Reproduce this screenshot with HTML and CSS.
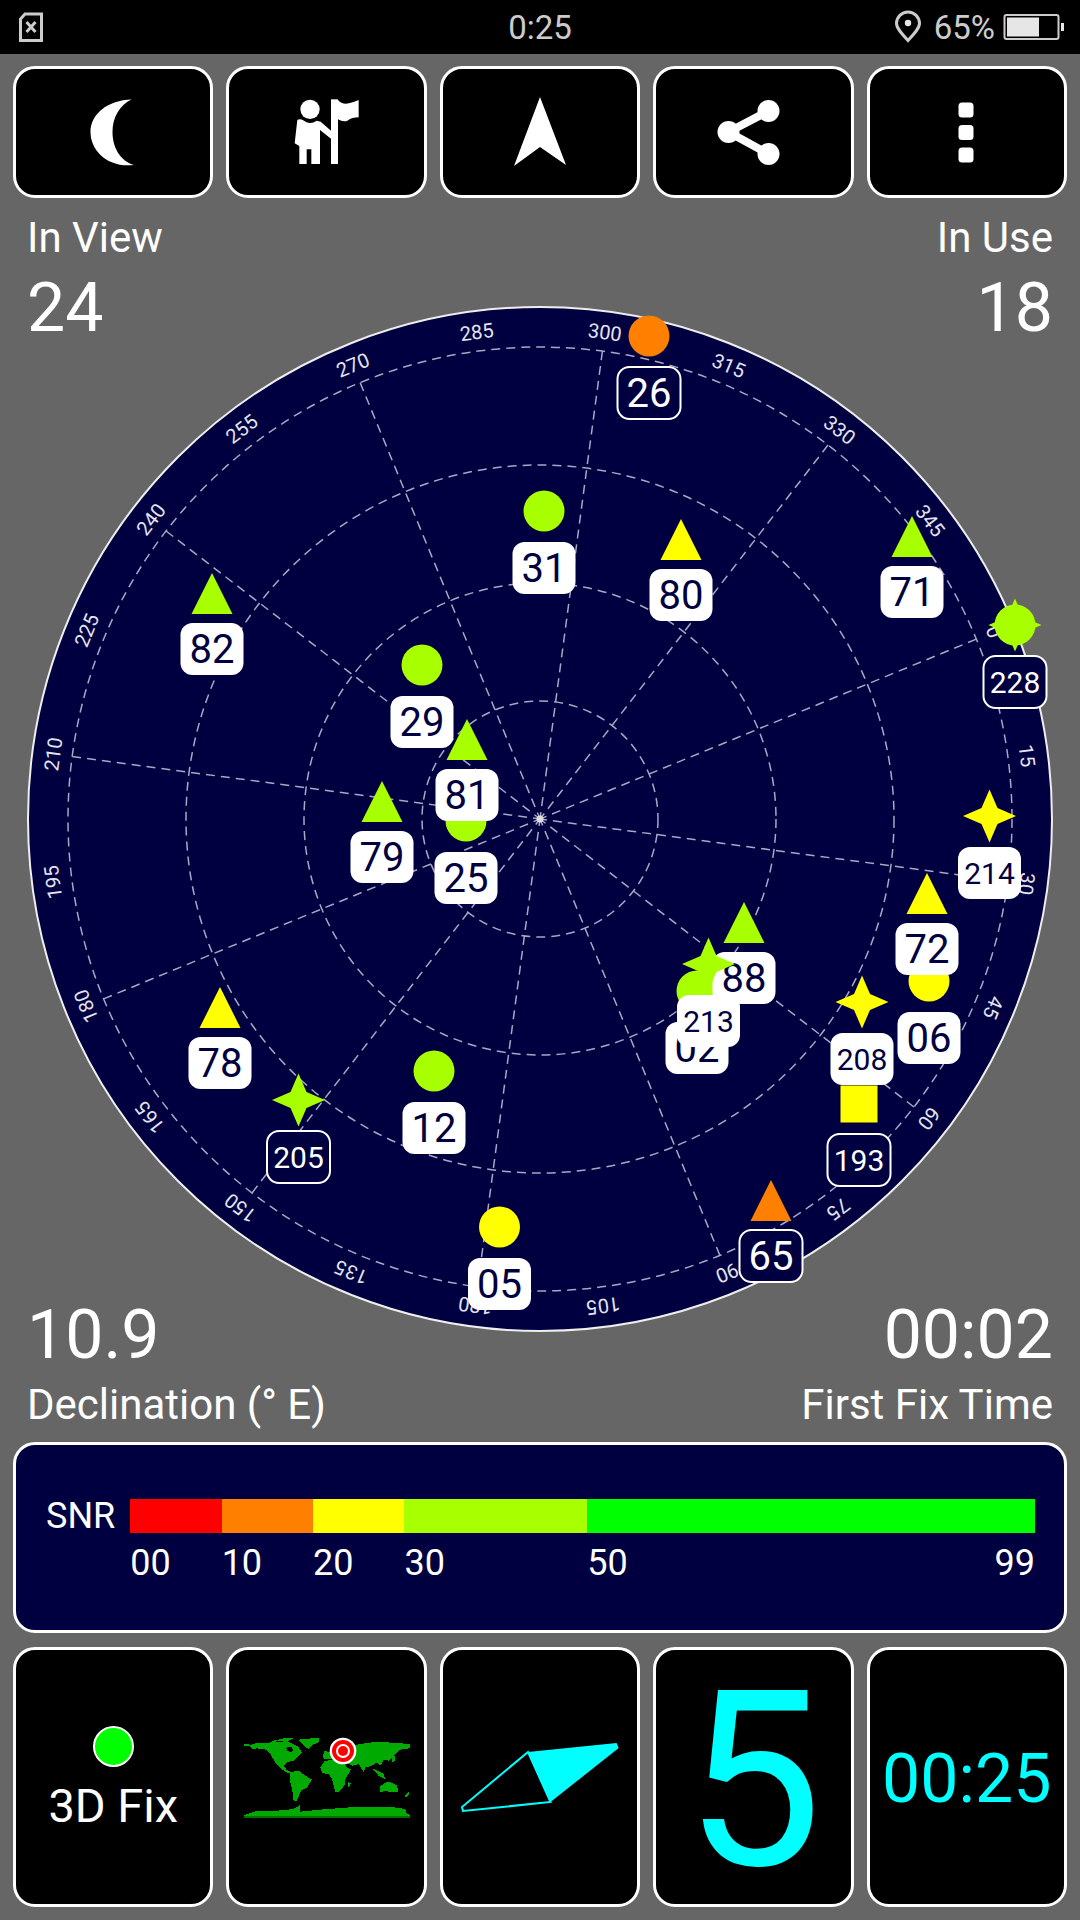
FILE: index.html
```html
<!DOCTYPE html>
<html lang="en">
<head>
  <meta charset="UTF-8">
  <meta name="viewport" content="width=device-width, initial-scale=1.0">
  <title>GPS Test</title>
  <link rel="stylesheet" href="styles.css">
</head>
<body>

  <div class="status-bar">
    <div class="status-left">
      <svg class="status-icon" width="26" height="32" viewBox="18 12 26 32">
        <path class="icon-line" d="M25 15 H41.5 V41.5 H20.5 V20 Z"/>
        <path class="icon-line" d="M26.5 23 L35.5 33 M35.5 23 L26.5 33"/>
      </svg>
    </div>
    <div class="status-time">0:25</div>
    <div class="status-right">
      <svg class="status-icon" width="30" height="34" viewBox="891 11 30 34">
        <path class="icon-line" d="M906 41.5 C899 34 894.5 29 894.5 24.5 A11.5 11.5 0 0 1 917.5 24.5 C917.5 29 913 34 906 41.5 Z"/>
        <circle class="icon-fill" cx="906" cy="24" r="3.2"/>
      </svg>
      <span class="status-pct">65%</span>
      <svg class="status-icon" width="64" height="30" viewBox="1003 12 64 30">
        <rect class="batt-line" x="1004.5" y="15" width="54" height="24" rx="2"/>
        <rect class="icon-fill" x="1007" y="17.5" width="32" height="19"/>
        <rect class="icon-fill" x="1061" y="23" width="3" height="8"/>
      </svg>
    </div>
  </div>

  <div class="toolbar">
    <div class="tile">
      <svg width="60" height="70" viewBox="-1 0 60 70">
        <path class="icon-white" d="M47.5 2.5 C24 3 6.5 17 6.5 35 C6.5 54 24 71 50 68 C36 64 28.5 50 28.5 35 C28.5 20 36 8 47.5 2.5 Z"/>
      </svg>
    </div>
    <div class="tile">
      <svg width="90" height="84" viewBox="4 0 270 252">
        <circle class="icon-white" cx="88" cy="58" r="29"/>
        <path class="icon-white" d="M50 90 Q58 85 70 92 Q88 106 108 92 L120 95 L151 122 L151 146 L118 120 V222 H92 V178 H78 V222 H56 V168 L42 160 Z"/>
        <rect class="icon-white" x="151" y="28" width="21" height="194"/>
        <path class="icon-white" d="M172 30 Q185 45 205 40 Q222 36 234 30 V82 Q215 82 200 92 Q188 97 172 88 Z"/>
      </svg>
    </div>
    <div class="tile">
      <svg width="56" height="72" viewBox="512 96 56 72">
        <path class="icon-white" d="M540 97 L566 165 L540 147 L514 166 Z"/>
      </svg>
    </div>
    <div class="tile">
      <svg width="80" height="70" viewBox="712.5 97 80 70">
        <path class="share-line" d="M768 111 L728 132 L768 154"/>
        <circle class="icon-white" cx="768" cy="111" r="11"/>
        <circle class="icon-white" cx="728" cy="132" r="11"/>
        <circle class="icon-white" cx="768" cy="154" r="11"/>
      </svg>
    </div>
    <div class="tile">
      <svg width="40" height="70" viewBox="948.5 97 40 70">
        <rect class="icon-white" x="960" y="102.5" width="15" height="15" rx="3.5"/>
        <rect class="icon-white" x="960" y="125" width="15" height="15" rx="3.5"/>
        <rect class="icon-white" x="960" y="147.5" width="15" height="15" rx="3.5"/>
      </svg>
    </div>
  </div>

  <div class="stats stats-top">
    <div class="stat">
      <div class="stat-label">In View</div>
      <div class="stat-value">24</div>
    </div>
    <div class="stat stat-right">
      <div class="stat-label">In Use</div>
      <div class="stat-value">18</div>
    </div>
  </div>

  <svg class="sky" width="1080" height="1040" viewBox="0 300 1080 1040">
    <defs>
      <polygon id="tri" points="0,-50 20.5,-9 -20.5,-9"/>
      <polygon id="star" points="0,-57.5 8,-39 26.5,-31 8,-23 0,-4.5 -8,-23 -26.5,-31 -8,-39"/>
    </defs>

    <circle class="disc" cx="540" cy="819" r="512"/>

    <circle class="grid-ring" cx="540" cy="819" r="118"/>
    <circle class="grid-ring" cx="540" cy="819" r="236"/>
    <circle class="grid-ring" cx="540" cy="819" r="354"/>
    <circle class="grid-ring" cx="540" cy="819" r="472"/>

    <line class="grid-ray" x1="540" y1="347" x2="540" y2="819" transform="rotate(7.6 540 819)"/>
    <line class="grid-ray" x1="540" y1="347" x2="540" y2="819" transform="rotate(37.6 540 819)"/>
    <line class="grid-ray" x1="540" y1="347" x2="540" y2="819" transform="rotate(67.6 540 819)"/>
    <line class="grid-ray" x1="540" y1="347" x2="540" y2="819" transform="rotate(97.6 540 819)"/>
    <line class="grid-ray" x1="540" y1="347" x2="540" y2="819" transform="rotate(127.6 540 819)"/>
    <line class="grid-ray" x1="540" y1="347" x2="540" y2="819" transform="rotate(157.6 540 819)"/>
    <line class="grid-ray" x1="540" y1="347" x2="540" y2="819" transform="rotate(187.6 540 819)"/>
    <line class="grid-ray" x1="540" y1="347" x2="540" y2="819" transform="rotate(217.6 540 819)"/>
    <line class="grid-ray" x1="540" y1="347" x2="540" y2="819" transform="rotate(247.6 540 819)"/>
    <line class="grid-ray" x1="540" y1="347" x2="540" y2="819" transform="rotate(277.6 540 819)"/>
    <line class="grid-ray" x1="540" y1="347" x2="540" y2="819" transform="rotate(307.6 540 819)"/>
    <line class="grid-ray" x1="540" y1="347" x2="540" y2="819" transform="rotate(337.6 540 819)"/>
    <circle class="hub" cx="540" cy="819" r="3.5"/>

    <text class="bearing" x="540" y="335" transform="rotate(67.6 540 819)">0</text>
    <text class="bearing" x="540" y="335" transform="rotate(82.6 540 819)">15</text>
    <text class="bearing" x="540" y="335" transform="rotate(97.6 540 819)">30</text>
    <text class="bearing" x="540" y="335" transform="rotate(112.6 540 819)">45</text>
    <text class="bearing" x="540" y="335" transform="rotate(127.6 540 819)">60</text>
    <text class="bearing" x="540" y="335" transform="rotate(142.6 540 819)">75</text>
    <text class="bearing" x="540" y="335" transform="rotate(157.6 540 819)">90</text>
    <text class="bearing" x="540" y="335" transform="rotate(172.6 540 819)">105</text>
    <text class="bearing" x="540" y="335" transform="rotate(187.6 540 819)">120</text>
    <text class="bearing" x="540" y="335" transform="rotate(202.6 540 819)">135</text>
    <text class="bearing" x="540" y="335" transform="rotate(217.6 540 819)">150</text>
    <text class="bearing" x="540" y="335" transform="rotate(232.6 540 819)">165</text>
    <text class="bearing" x="540" y="335" transform="rotate(247.6 540 819)">180</text>
    <text class="bearing" x="540" y="335" transform="rotate(262.6 540 819)">195</text>
    <text class="bearing" x="540" y="335" transform="rotate(277.6 540 819)">210</text>
    <text class="bearing" x="540" y="335" transform="rotate(292.6 540 819)">225</text>
    <text class="bearing" x="540" y="335" transform="rotate(307.6 540 819)">240</text>
    <text class="bearing" x="540" y="335" transform="rotate(322.6 540 819)">255</text>
    <text class="bearing" x="540" y="335" transform="rotate(337.6 540 819)">270</text>
    <text class="bearing" x="540" y="335" transform="rotate(352.6 540 819)">285</text>
    <text class="bearing" x="540" y="335" transform="rotate(7.6 540 819)">300</text>
    <text class="bearing" x="540" y="335" transform="rotate(22.6 540 819)">315</text>
    <text class="bearing" x="540" y="335" transform="rotate(37.6 540 819)">330</text>
    <text class="bearing" x="540" y="335" transform="rotate(52.6 540 819)">345</text>

    <!-- each sat sits at the top centre of its tag -->
    <g class="sat orange off" transform="translate(649 367)"><circle class="dot"/><rect class="tag"/><text class="num" y="40">26</text></g>
    <g class="sat lime" transform="translate(212 623)"><use href="#tri"/><rect class="tag"/><text class="num" y="40">82</text></g>
    <g class="sat lime" transform="translate(422 696)"><circle class="dot"/><rect class="tag"/><text class="num" y="40">29</text></g>
    <g class="sat lime" transform="translate(544 542)"><circle class="dot"/><rect class="tag"/><text class="num" y="40">31</text></g>
    <g class="sat yellow" transform="translate(681 569)"><use href="#tri"/><rect class="tag"/><text class="num" y="40">80</text></g>
    <g class="sat lime" transform="translate(912 566)"><use href="#tri"/><rect class="tag"/><text class="num" y="40">71</text></g>
    <g class="sat lime off" transform="translate(1015 656)"><circle class="dot"/><use href="#star"/><rect class="tag"/><text class="num small" y="37">228</text></g>
    <g class="sat lime" transform="translate(466 852)"><circle class="dot"/><rect class="tag"/><text class="num" y="40">25</text></g>
    <g class="sat lime" transform="translate(467 769)"><use href="#tri"/><rect class="tag"/><text class="num" y="40">81</text></g>
    <g class="sat lime" transform="translate(382 831)"><use href="#tri"/><rect class="tag"/><text class="num" y="40">79</text></g>
    <g class="sat yellow" transform="translate(220 1037)"><use href="#tri"/><rect class="tag"/><text class="num" y="40">78</text></g>
    <g class="sat lime off" transform="translate(298.5 1131)"><use href="#star"/><rect class="tag"/><text class="num small" y="37">205</text></g>
    <g class="sat lime" transform="translate(434 1102)"><circle class="dot"/><rect class="tag"/><text class="num" y="40">12</text></g>
    <g class="sat yellow" transform="translate(499.5 1258)"><circle class="dot"/><rect class="tag"/><text class="num" y="40">05</text></g>
    <g class="sat orange off" transform="translate(771 1230)"><use href="#tri"/><rect class="tag"/><text class="num" y="40">65</text></g>
    <g class="sat yellow off" transform="translate(859 1134)"><rect class="block"/><rect class="tag"/><text class="num small" y="37">193</text></g>
    <g class="sat yellow" transform="translate(862 1033)"><use href="#star"/><rect class="tag"/><text class="num small" y="37">208</text></g>
    <g class="sat yellow" transform="translate(929 1012)"><circle class="dot"/><rect class="tag"/><text class="num" y="40">06</text></g>
    <g class="sat yellow" transform="translate(927 923)"><use href="#tri"/><rect class="tag"/><text class="num" y="40">72</text></g>
    <g class="sat lime" transform="translate(697 1022)"><circle class="dot"/><rect class="tag"/><text class="num" y="40">02</text></g>
    <g class="sat lime" transform="translate(744 952)"><use href="#tri"/><rect class="tag"/><text class="num" y="40">88</text></g>
    <g class="sat lime" transform="translate(708.5 995)"><use href="#star"/><rect class="tag"/><text class="num small" y="37">213</text></g>
    <g class="sat yellow" transform="translate(989.5 847)"><use href="#star"/><rect class="tag"/><text class="num small" y="37">214</text></g>
  </svg>

  <div class="stats stats-bottom">
    <div class="stat">
      <div class="stat-value">10.9</div>
      <div class="stat-label">Declination (° E)</div>
    </div>
    <div class="stat stat-right">
      <div class="stat-value">00:02</div>
      <div class="stat-label">First Fix Time</div>
    </div>
  </div>

  <div class="snr-panel">
    <div class="snr-title">SNR</div>
    <div class="snr-bar">
      <div class="seg w10 red"></div>
      <div class="seg w10 amber"></div>
      <div class="seg w10 gold"></div>
      <div class="seg w20 leaf"></div>
      <div class="seg w49 full"></div>
    </div>
    <div class="snr-ticks">
      <span class="w10">00</span>
      <span class="w10">10</span>
      <span class="w10">20</span>
      <span class="w20">30</span>
      <span class="w49 tick-ends"><span>50</span><span>99</span></span>
    </div>
  </div>

  <div class="cards">
    <div class="tile fix-card">
      <div class="fix-dot"></div>
      <div class="fix-text">3D Fix</div>
    </div>
    <div class="tile">
      <svg width="180" height="96" viewBox="0 0 540 288" shape-rendering="crispEdges">
        <g class="land">
          <polygon points="22,44 36,44 38,50 48,44 70,42 95,42 108,36 135,40 150,36 170,46 185,54 195,72 180,85 170,95 150,100 140,110 148,122 165,130 160,134 145,128 130,118 115,100 100,75 88,62 60,58 48,62 40,52 22,50"/>
          <polygon points="185,32 245,26 245,40 225,48 215,60 200,50"/>
          <polygon points="105,36 140,28 170,28 150,38"/>
          <polygon points="160,130 185,125 205,140 225,152 210,175 192,185 180,215 170,218 168,195 160,160"/>
          <polygon points="250,115 262,97 285,92 320,100 330,115 342,122 325,150 325,165 305,190 295,188 285,150 275,135 255,132"/>
          <polygon points="256,88 262,66 280,70 290,60 350,50 370,45 420,38 520,45 518,58 490,62 470,80 455,95 440,92 430,110 420,100 405,110 385,115 380,130 365,105 345,110 325,100 290,92"/>
          <polygon points="430,172 450,158 462,160 480,170 485,190 460,190 445,185 430,190"/>
          <polygon points="405,118 420,125 440,135 445,150 425,140"/>
          <polygon points="332,160 342,162 335,178"/>
          <polygon points="465,82 474,82 472,100 465,98"/>
          <polygon points="502,202 515,190 516,196 508,206"/>
          <polygon points="22,258 60,245 120,245 170,240 190,228 190,248 250,242 340,235 400,235 470,235 505,240 510,255 520,258 520,262 22,262"/>
        </g>
        <polygon class="hudson" points="146,56 165,54 168,66 158,70 150,64"/>
        <rect class="land-edge" x="22" y="262" width="498" height="4"/>
        <g shape-rendering="auto">
          <circle class="ring-white" cx="318" cy="66" r="40"/>
          <circle class="ring-red" cx="318" cy="66" r="33"/>
          <circle class="ring-white" cx="318" cy="66" r="21"/>
          <circle class="ring-red" cx="318" cy="66" r="15"/>
        </g>
      </svg>
    </div>
    <div class="tile">
      <svg width="160" height="74" viewBox="460 1740 160 74">
        <polygon class="needle-fill" points="528,1752 616.6,1743 618.7,1748 550.5,1802"/>
        <polygon class="needle-line" points="528,1752 462,1807 463,1811 550.5,1802"/>
      </svg>
    </div>
    <div class="tile big-card">5</div>
    <div class="tile clock-card">00:25</div>
  </div>

</body>
</html>
```

FILE: styles.css
```css
body {
  margin: 0;
  width: 1080px;
  height: 1920px;
  overflow: hidden;
  background: #666;
  color: #fff;
  font-family: Roboto, sans-serif;
}

svg {
  display: block;
}

.status-bar {
  display: grid;
  grid-template-columns: 1fr auto 1fr;
  align-items: center;
  height: 54px;
  padding: 0 13px;
  background: #000;
  color: #ccc;
  font-size: 33px;
}

.status-left {
  display: flex;
  padding-left: 5px;
}

.status-right {
  display: flex;
  align-items: center;
  justify-content: flex-end;
}

.status-pct {
  font-size: 33px;
  margin: 0 8px 0 11px;
}

.icon-line {
  fill: none;
  stroke: #ccc;
  stroke-width: 3;
}

.batt-line {
  fill: none;
  stroke: #ccc;
  stroke-width: 2;
}

.icon-fill {
  fill: #e6e6e6;
}

.icon-white {
  fill: #fff;
}

.share-line {
  fill: none;
  stroke: #fff;
  stroke-width: 8;
}

.toolbar,
.cards {
  display: grid;
  grid-template-columns: repeat(5, 1fr);
  gap: 13px;
  padding: 0 13px;
}

.toolbar {
  margin-top: 12px;
  height: 132px;
}

.tile {
  display: flex;
  align-items: center;
  justify-content: center;
  box-sizing: border-box;
  min-width: 0;
  background: #000;
  border: 3px solid #fff;
  border-radius: 22px;
}

.stats {
  display: flex;
  justify-content: space-between;
  padding: 0 27px;
}

.stats-top {
  margin-top: 15px;
}

.stats-top .stat-value {
  margin-top: 6.5px;
}

.stats-bottom .stat-label {
  margin-top: 6.5px;
}

.stat-right {
  text-align: right;
}

.stat-label {
  font-size: 42px;
  line-height: 50px;
}

.stat-value {
  font-size: 68px;
  line-height: 76px;
}

.sky {
  margin-top: -45.5px;
}

.stats-bottom {
  margin-top: -43px;
}

.disc {
  fill: #000040;
  stroke: #eee;
  stroke-width: 2;
}

.grid-ring,
.grid-ray {
  fill: none;
  stroke: #a8a8c4;
  stroke-width: 1.5;
  stroke-dasharray: 9 6;
}

.hub {
  fill: #ddd;
}

.bearing {
  fill: #e4e4f0;
  font-size: 20px;
  text-anchor: middle;
}

.lime { fill: #a8ff00; }
.yellow { fill: #ffff00; }
.orange { fill: #ff8000; }

.dot {
  cy: -31px;
  r: 20.5px;
}

.block {
  x: -18.5px;
  y: -48.5px;
  width: 37px;
  height: 37px;
}

.tag {
  x: -31.5px;
  y: 0;
  width: 63px;
  height: 52px;
  rx: 12px;
  fill: #fff;
}

.num {
  fill: #000040;
  font-size: 40px;
  text-anchor: middle;
}

.num.small {
  font-size: 30px;
}

.off .tag {
  fill: #000040;
  stroke: #fff;
  stroke-width: 2;
}

.off .num {
  fill: #fff;
}

.snr-panel {
  display: grid;
  grid-template-columns: auto 1fr;
  align-content: start;
  column-gap: 15px;
  box-sizing: border-box;
  height: 191px;
  margin: 12.5px 13px 0;
  padding: 54px 29px 0 30px;
  background: #000040;
  border: 3px solid #fff;
  border-radius: 22px;
  font-size: 36px;
}

.snr-title {
  line-height: 34px;
}

.snr-bar {
  display: flex;
  height: 34px;
}

.snr-ticks {
  grid-column: 2;
  display: flex;
  margin-top: 9px;
  line-height: 42px;
}

.w10 { flex: 10; }
.w20 { flex: 20; }
.w49 { flex: 49; }

.red { background: #ff0000; }
.amber { background: #ff8000; }
.gold { background: #ffff00; }
.leaf { background: #a8ff00; }
.full { background: #00ff00; }

.tick-ends {
  display: flex;
  justify-content: space-between;
}

.cards {
  grid-template-rows: 260px;
  margin-top: 14px;
}

.fix-card {
  flex-direction: column;
  padding-top: 5px;
}

.fix-dot {
  box-sizing: border-box;
  width: 41px;
  height: 41px;
  margin-bottom: 12px;
  background: #00ff00;
  border: 2px solid #fff;
  border-radius: 50%;
}

.fix-text {
  font-size: 47px;
  line-height: 54px;
}

.land { fill: #00aa00; }
.hudson { fill: #000; }
.land-edge { fill: #007000; }
.ring-white { fill: #fff; }
.ring-red { fill: #ff0000; }

.needle-fill {
  fill: #00ffff;
}

.needle-line {
  fill: none;
  stroke: #00ffff;
  stroke-width: 2;
}

.big-card {
  padding-top: 9px;
  color: #00ffff;
  font-size: 245px;
  line-height: 230px;
}

.clock-card {
  padding-top: 4px;
  color: #00ffff;
  font-size: 68px;
  white-space: nowrap;
}
```
